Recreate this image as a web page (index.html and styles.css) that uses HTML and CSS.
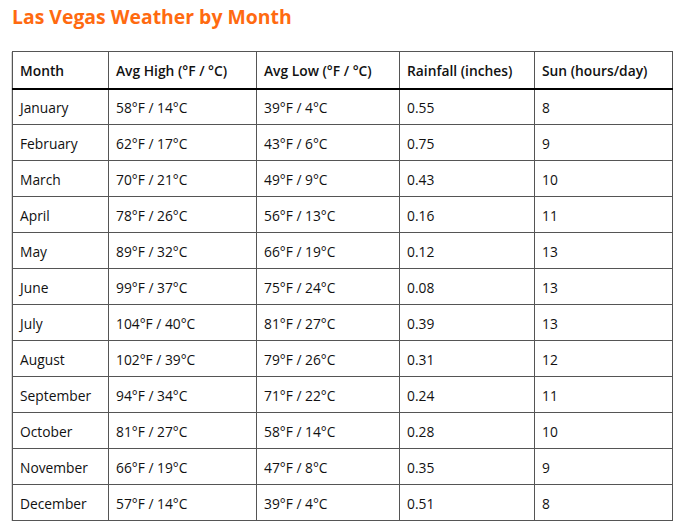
FILE: index.html
```html
<!DOCTYPE html>
<html>
<head>
<meta charset="utf-8">
<link rel="stylesheet" href="styles.css">
</head>
<body>
<h1 class="title">Las Vegas Weather by Month</h1>
<table class="weather">
<thead>
<tr><th class="c1">Month</th><th class="c2">Avg High (°F / °C)</th><th class="c3">Avg Low (°F / °C)</th><th class="c4">Rainfall (inches)</th><th class="c5">Sun (hours/day)</th></tr>
</thead>
<tbody>
<tr><td>January</td><td>58°F / 14°C</td><td>39°F / 4°C</td><td>0.55</td><td>8</td></tr>
<tr><td>February</td><td>62°F / 17°C</td><td>43°F / 6°C</td><td>0.75</td><td>9</td></tr>
<tr><td>March</td><td>70°F / 21°C</td><td>49°F / 9°C</td><td>0.43</td><td>10</td></tr>
<tr><td>April</td><td>78°F / 26°C</td><td>56°F / 13°C</td><td>0.16</td><td>11</td></tr>
<tr><td>May</td><td>89°F / 32°C</td><td>66°F / 19°C</td><td>0.12</td><td>13</td></tr>
<tr><td>June</td><td>99°F / 37°C</td><td>75°F / 24°C</td><td>0.08</td><td>13</td></tr>
<tr><td>July</td><td>104°F / 40°C</td><td>81°F / 27°C</td><td>0.39</td><td>13</td></tr>
<tr><td>August</td><td>102°F / 39°C</td><td>79°F / 26°C</td><td>0.31</td><td>12</td></tr>
<tr><td>September</td><td>94°F / 34°C</td><td>71°F / 22°C</td><td>0.24</td><td>11</td></tr>
<tr><td>October</td><td>81°F / 27°C</td><td>58°F / 14°C</td><td>0.28</td><td>10</td></tr>
<tr><td>November</td><td>66°F / 19°C</td><td>47°F / 8°C</td><td>0.35</td><td>9</td></tr>
<tr><td>December</td><td>57°F / 14°C</td><td>39°F / 4°C</td><td>0.51</td><td>8</td></tr>
</tbody>
</table>
</body>
</html>
```
FILE: styles.css
```css
html, body {
  margin: 0;
  padding: 0;
  background: #fff;
}
body {
  padding: 0 12px;
  font-family: "Open Sans", "Noto Sans", sans-serif;
  color: #111;
}
.title {
  margin: 0;
  padding-top: 3px;
  font-size: 19.4px;
  line-height: 28px;
  font-weight: 700;
  color: #ff6a10;
}
.weather {
  margin-top: 20px;
  border-collapse: collapse;
  width: 660px;
  table-layout: fixed;
  font-size: 13.8px;
  border: 1px solid #555;
  box-shadow: -1px 1px 0 #d8d8d8;
}
.weather th, .weather td {
  box-sizing: border-box;
  border: 1px solid #555;
  text-align: left;
  padding: 2px 7px 0;
  height: 36px;
  white-space: nowrap;
}
.weather th {
  font-weight: 600;
  height: 37px;
  padding-top: 2px;
  border-bottom: 2px solid #000;
}
.c1 { width: 96px; }
.c2 { width: 148px; }
.c3 { width: 143px; }
.c4 { width: 135px; }
.c5 { width: 138px; }
```
